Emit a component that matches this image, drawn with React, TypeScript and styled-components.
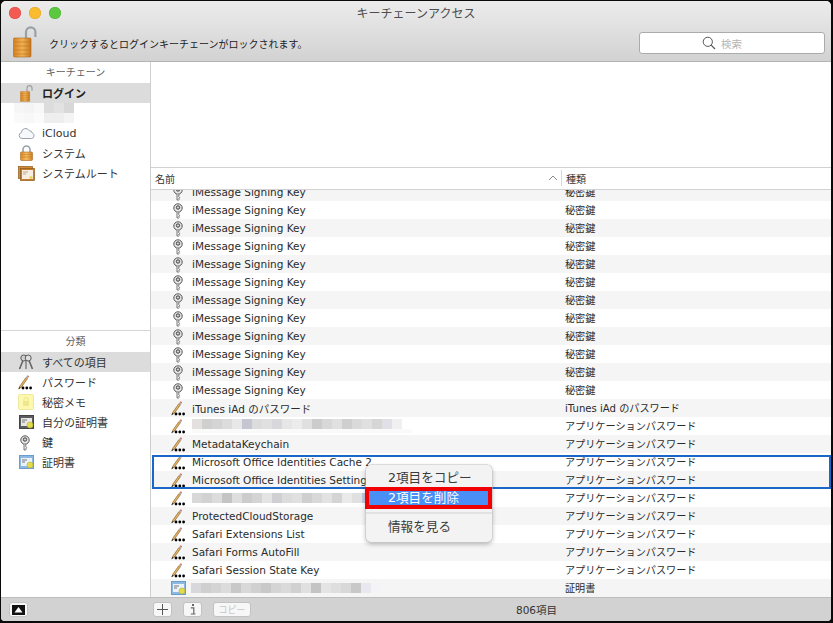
import React from "react";
import styled, { createGlobalStyle } from "styled-components";

const GlobalStyle = createGlobalStyle`
  html, body {
    margin: 0;
    padding: 0;
    background: #0a0a0a;
    overflow: hidden;
  }
`;

const latin = `"DejaVu Sans", "Noto Sans CJK JP", sans-serif`;

const Window = styled.div`
  box-sizing: border-box;
  width: 830px;
  height: 620px;
  margin: 1px 0 0 1px;
  display: flex;
  flex-direction: column;
  background: #fff;
  border-radius: 5px 5px 4px 4px;
  overflow: hidden;
  font-family: ${latin};
  color: #2c2c2c;
`;

const TitleBar = styled.header`
  box-sizing: border-box;
  height: 61px;
  flex: none;
  display: flex;
  flex-direction: column;
  background: linear-gradient(#ececec, #d2d2d2);
  border-bottom: 1px solid #b4b4b4;
`;

const TitleRow = styled.div`
  height: 23px;
  display: flex;
  align-items: center;
  padding-left: 8px;
`;

const Light = styled.span<{ $color: string; $edge: string }>`
  width: 12px;
  height: 12px;
  margin-right: 8px;
  border-radius: 50%;
  background: ${(p) => p.$color};
  box-shadow: inset 0 0 0 0.5px ${(p) => p.$edge};
`;

const Title = styled.div`
  flex: 1;
  margin-left: -60px;
  padding-right: 8px;
  text-align: center;
  font-size: 12px;
  color: #4d4d4d;
`;

const ToolRow = styled.div`
  flex: 1;
  display: flex;
  align-items: center;
  padding: 0 6px 1px 12px;
`;

const LockHint = styled.div`
  flex: 1;
  margin-left: 12px;
  margin-top: 2px;
  font-size: 10px;
  color: #222;
`;

const SearchField = styled.div`
  box-sizing: border-box;
  width: 186px;
  height: 22px;
  margin-top: 2px;
  display: flex;
  align-items: center;
  justify-content: center;
  gap: 5px;
  padding-right: 20px;
  background: #fff;
  border: 1px solid #ababab;
  border-radius: 3px;
  font-size: 10.5px;
  color: #b5b5b5;
`;

const Body = styled.div`
  flex: 1;
  min-height: 0;
  display: flex;
`;

const Sidebar = styled.aside`
  box-sizing: border-box;
  width: 150px;
  flex: none;
  display: flex;
  flex-direction: column;
  border-right: 1px solid #cfcfcf;
`;

const SideSection = styled.section<{ $first?: boolean }>`
  flex: ${(p) => (p.$first ? "none" : "1")};
  height: ${(p) => (p.$first ? "268px" : "auto")};
  border-top: ${(p) => (p.$first ? "none" : "1px solid #d6d6d6")};
`;

const SideHeading = styled.div`
  height: 21px;
  line-height: 21px;
  text-align: center;
  font-size: 10px;
  color: #5f5f5f;
`;

const SideRow = styled.div<{ $selected?: boolean }>`
  height: 20px;
  display: flex;
  align-items: center;
  gap: 7px;
  padding-left: 16px;
  font-size: 11px;
  background: ${(p) => (p.$selected ? "#dcdcdc" : "transparent")};
  color: #333;
`;

const SideIcon = styled.span`
  width: 18px;
  height: 20px;
  flex: none;
  display: flex;
  align-items: center;
  justify-content: center;
`;

const BoldLabel = styled.span`
  font-weight: 700;
  color: #222;
`;

const SideBlur = styled.div`
  height: 20px;
  padding-left: 13px;
  display: flex;
  flex-direction: column;
  justify-content: center;
`;

const Main = styled.main`
  flex: 1;
  min-width: 0;
  display: flex;
  flex-direction: column;
`;

const PreviewPane = styled.div`
  height: 105px;
  flex: none;
  background: #fff;
`;

const TableHeader = styled.div`
  box-sizing: border-box;
  height: 23px;
  flex: none;
  display: flex;
  align-items: center;
  padding-bottom: 1px;
  border-top: 1px solid #d2d2d2;
  border-bottom: 1px solid #d2d2d2;
  font-size: 10px;
  color: #333;
  background: #fff;
`;

const NameHeader = styled.div`
  box-sizing: border-box;
  width: 411px;
  height: 16px;
  padding: 0 3px 0 4px;
  display: flex;
  align-items: center;
  justify-content: space-between;
  border-right: 1px solid #d8d8d8;
`;

const KindHeader = styled.div`
  padding-left: 4px;
`;

const ListWrap = styled.div`
  flex: 1;
  min-height: 0;
  position: relative;
`;

const List = styled.div`
  height: 100%;
  display: flex;
  flex-direction: column;
  justify-content: flex-end;
  overflow: hidden;
`;

const Row = styled.div<{ $striped: boolean }>`
  height: 18px;
  flex: none;
  display: flex;
  align-items: center;
  background: ${(p) => (p.$striped ? "#f5f5f5" : "#fff")};
  font-size: 10.5px;
  color: #2b2b2b;
`;

const NameCell = styled.div`
  width: 411px;
  flex: none;
  box-sizing: border-box;
  padding-left: 20px;
  display: flex;
  align-items: center;
  gap: 5px;
  white-space: nowrap;

  & > svg {
    flex: none;
  }
`;

const KindCell = styled.div`
  padding: 0 0 1px 3px;
  font-size: 10.15px;
  white-space: nowrap;
`;

const SelectedGroup = styled.div`
  flex: none;
  position: relative;

  &::after {
    content: "";
    position: absolute;
    top: 2px;
    left: 1px;
    right: 0;
    bottom: 0;
    border: 2px solid #1b66c9;
    pointer-events: none;
  }
`;

const MosaicBox = styled.div`
  display: flex;
  flex-direction: column;
`;

const Strip = styled.div`
  display: flex;
`;

const Cell = styled.span<{ $c: string; $h: number }>`
  width: 10px;
  height: ${(p) => p.$h}px;
  background: ${(p) => p.$c};
`;

const ContextMenu = styled.div`
  position: absolute;
  left: 215px;
  top: 275px;
  width: 126px;
  height: 77px;
  box-sizing: border-box;
  padding-top: 4px;
  background: #f3f3f3;
  border-radius: 5px;
  box-shadow: 0 0 0 0.5px #c4c4c4, 0 2px 5px rgba(0, 0, 0, 0.3);
  font-size: 12.6px;
  color: #3a3a3a;
`;

const MenuItem = styled.div`
  height: 18px;
  line-height: 18px;
  padding-left: 22px;
`;

const MenuItemActive = styled.div`
  box-sizing: border-box;
  height: 22px;
  margin: 0 0 0 -1px;
  padding-left: 19px;
  line-height: 14px;
  background: #4a8ff5;
  border: 4px solid #f00000;
  color: #fff;
`;

const MenuSep = styled.div`
  height: 2px;
  margin: 3px 0 4px;
  background: #e2e2e2;
`;

const BottomBar = styled.footer`
  box-sizing: border-box;
  height: 24px;
  flex: none;
  display: flex;
  align-items: center;
  background: #d2d2d2;
  border-top: 1px solid #bdbdbd;
`;

const BarLeft = styled.div`
  width: 152px;
  flex: none;
  padding-left: 8px;
  box-sizing: border-box;
  display: flex;
`;

const BarButton = styled.button<{ $w?: number; $faded?: boolean }>`
  box-sizing: border-box;
  width: ${(p) => p.$w ?? 19}px;
  height: 15px;
  margin: 0 11px 0 0;
  padding: 0;
  display: flex;
  align-items: center;
  justify-content: center;
  background: #f7f7f7;
  border: 1px solid #c2c2c2;
  border-radius: 3px;
  font-family: ${latin};
  font-size: 9px;
  color: ${(p) => (p.$faded ? "#c6c6c6" : "#444")};
`;

const Count = styled.div`
  margin-left: 254px;
  font-size: 10.5px;
  color: #333;
`;

const KeyIcon = () => (
  <svg width="16" height="18" viewBox="0 0 16 18" fill="none">
    <circle cx="7" cy="7" r="4.2" fill="#e6e6e6" stroke="#555" />
    <circle cx="7" cy="6.5" r="1.7" fill="#cfcfcf" stroke="#333" strokeWidth="0.9" />
    <path d="M6 11.2V17h1.6l1-.9-.8-.8.8-.8-.8-.8V11.2" fill="#f2f2f2" stroke="#555" strokeWidth="0.8" />
  </svg>
);

const PencilIcon = () => (
  <svg width="16" height="16" viewBox="0 0 16 16" fill="none">
    <path d="M8 3.5 2 11.9l-1.3 3 2.8-1.9 6-8.4z" fill="#f0b257" stroke="#7c6536" strokeWidth="0.7" />
    <path d="M8 3.5l1.5 1.1.9-1.3-1.5-1.1z" fill="#b9b9b9" stroke="#8a8a8a" strokeWidth="0.3" />
    <path d="M8.9 2.2l1.5 1.1.7-1-1.5-1.1z" fill="#d9614f" />
    <path d="M1.5 12.9l-.8 2 1.8-1.2z" fill="#222" />
    <circle cx="5" cy="14" r="1.4" fill="#000" />
    <circle cx="8.8" cy="14" r="1.4" fill="#000" />
    <circle cx="12.6" cy="14" r="1.4" fill="#000" />
  </svg>
);

const CertIcon = ({ blue }: { blue?: boolean }) => (
  <svg width="15" height="14" viewBox="0 0 15 14" fill="none">
    <rect x="0.5" y="0.5" width="14" height="13" fill={blue ? "#8db8e2" : "#5d5d5d"} stroke={blue ? "#6a9ccc" : "#444"} />
    <rect x="2" y="3" width="11" height="8" fill={blue ? "#e9f2fa" : "#e8e8e8"} />
    <path d="M3 5h5M3 7h3" stroke="#777" />
    <circle cx="11" cy="10" r="3" fill="#e2dc4a" stroke="#b8ae2c" strokeWidth="0.6" />
  </svg>
);

const NoteIcon = () => (
  <svg width="16" height="16" viewBox="0 0 16 16" fill="none">
    <rect x="0.5" y="0.5" width="15" height="15" rx="1" fill="#fdf8b0" stroke="#eee79c" />
    <rect x="5" y="7" width="6" height="5" fill="#f0e78c" />
    <path d="M6 7V5.5a2 2 0 0 1 4 0V7" stroke="#f0e78c" strokeWidth="1.2" />
  </svg>
);

const CloudIcon = () => (
  <svg width="17" height="14" viewBox="0 0 17 14" fill="none">
    <path
      d="M4 12.5a3 3 0 0 1-.6-5.9 4.2 4.2 0 0 1 7.9-1.9 2.8 2.8 0 0 1 3 2.4 2.8 2.8 0 0 1-.8 5.4z"
      fill="#f6f8fb"
      stroke="#9aa2ad"
    />
  </svg>
);

const OpenLock = ({ w, h }: { w: number; h: number }) => (
  <svg width={w} height={h} viewBox="0 0 24 32" fill="none">
    <defs>
      <linearGradient id="goldOpen" x1="0" x2="1" y1="0" y2="0">
        <stop offset="0" stopColor="#d8801f" />
        <stop offset="0.5" stopColor="#f1b256" />
        <stop offset="1" stopColor="#c8771e" />
      </linearGradient>
    </defs>
    <path d="M13 12V6a4.7 4.7 0 0 1 9.4 0v5" stroke="#9aa0a8" strokeWidth="2.2" />
    <rect x="0.5" y="12" width="17.5" height="19" rx="1" fill="url(#goldOpen)" stroke="#a86a1f" strokeWidth="0.6" />
    <path d="M1 16h17M1 20h17M1 24h17M1 28h17" stroke="#b8761f" strokeWidth="0.6" />
  </svg>
);

const ClosedLock = () => (
  <svg width="13" height="16" viewBox="0 0 13 16" fill="none">
    <defs>
      <linearGradient id="goldClosed" x1="0" x2="1" y1="0" y2="0">
        <stop offset="0" stopColor="#dc8b29" />
        <stop offset="0.5" stopColor="#f4bb62" />
        <stop offset="1" stopColor="#d08024" />
      </linearGradient>
    </defs>
    <path d="M3 7V4.5a3.5 3.5 0 0 1 7 0V7" stroke="#9aa0a8" strokeWidth="1.6" />
    <rect x="0.5" y="7" width="12" height="8.5" rx="1" fill="url(#goldClosed)" stroke="#a86a1f" strokeWidth="0.6" />
    <path d="M1 9.5h11M1 12h11" stroke="#b8761f" strokeWidth="0.5" />
  </svg>
);

const RootCertIcon = () => (
  <svg width="17" height="15" viewBox="0 0 17 15" fill="none">
    <rect x="0.5" y="0.5" width="14" height="12" fill="#d58a34" stroke="#8c5b1f" strokeWidth="0.7" />
    <rect x="2.5" y="2.5" width="14" height="12" fill="#c97d2b" stroke="#8c5b1f" strokeWidth="0.7" />
    <rect x="4" y="4" width="11" height="9" fill="#f6eee2" />
    <path d="M5 6h5M5 8h3" stroke="#b9a98f" />
    <circle cx="13" cy="11.5" r="1.6" fill="#e6d65a" />
  </svg>
);

const AllItemsIcon = () => (
  <svg width="16" height="16" viewBox="0 0 16 16" fill="none">
    <path d="M5 6.5 1.5 15M11 6.5 14.5 15" stroke="#666" strokeWidth="1.6" />
    <path d="M8 7v8" stroke="#888" strokeWidth="1.6" />
    <circle cx="5.8" cy="4" r="3" fill="#cfcfcf" stroke="#5c5c5c" />
    <circle cx="10.2" cy="4" r="3" fill="#dedede" stroke="#5c5c5c" />
  </svg>
);

const SearchIcon = () => (
  <svg width="14" height="14" viewBox="0 0 14 14" fill="none">
    <circle cx="5.8" cy="5.8" r="4.6" stroke="#555" strokeWidth="1" />
    <path d="M9.2 9.2 13 13" stroke="#555" strokeWidth="1.2" />
  </svg>
);

const PlusIcon = () => (
  <svg width="11" height="11" viewBox="0 0 11 11">
    <path d="M5.5 0v11M0 5.5h11" stroke="#555" strokeWidth="1" />
  </svg>
);

const InfoIcon = () => (
  <svg width="6" height="11" viewBox="0 0 6 11">
    <rect x="2" y="0" width="2" height="2" fill="#666" />
    <path d="M.8 3.8H3.8V10H5.4M.8 10h3" stroke="#666" strokeWidth="1.2" fill="none" />
  </svg>
);

const PreviewIcon = () => (
  <svg width="13" height="10" viewBox="0 0 13 10">
    <rect x="0" y="0" width="13" height="10" fill="#111" />
    <path d="M6.5 2 10.5 7.5h-8z" fill="#fff" />
  </svg>
);

const Mosaic = ({ top, bottom }: { top: string[]; bottom?: string[] }) => (
  <MosaicBox>
    <Strip>
      {top.map((c, i) => (
        <Cell key={i} $c={c} $h={10} />
      ))}
    </Strip>
    {bottom && (
      <Strip>
        {bottom.map((c, i) => (
          <Cell key={i} $c={c} $h={4} />
        ))}
      </Strip>
    )}
  </MosaicBox>
);

const blurA = [
  "#e4e0e0", "#cfcfcf", "#d4d4d4", "#dcdcdc", "#e8e8e8", "#c6c6d2", "#dcdcdc", "#e0e0e0", "#d8d8dc", "#e6e6e6",
  "#ececec", "#e0e0e0", "#cccccc", "#d8d8d8", "#e0e0e0", "#cfcfcf", "#dadada", "#e0e0e0", "#d6d6d6", "#e0e0e6", "#f0f0f0",
];
const blurAUnder = Array(22).fill("#fafafa");
const blurB = [
  "#d8d8d8", "#d2d2d2", "#dcdcdc", "#c4c4c4", "#dedede", "#cccccc", "#d4d4d4", "#e4e4e4", "#d0d0d4", "#dcdcdc",
  "#e0e0e0", "#cfcfcf", "#d8d8d8", "#e2e2e2", "#d4d4d4", "#eaeaea", "#e0e0e0", "#c0c8e0",
];
const blurC = [
  "#d8d8dc", "#cfcfcf", "#d4d4d4", "#dcdcdc", "#c8c8c8", "#d8d8d8", "#d0d0d0", "#c8c8c8", "#d4d4d4", "#dadada",
  "#d0d0d0", "#e0e0e0", "#c4c4c4", "#e4e4e4", "#dedede", "#d8d8d8", "#c8c8c8", "#e8e8ee", "#f4f4f8",
];

const blurNames: Record<string, string[]> = { a: blurA, b: blurB, c: blurC };

type Item = { name?: string; blur?: string; kind: string; icon: "key" | "pencil" | "cert" };

const appPw = "アプリケーションパスワード";

const keyRows: Item[] = Array.from({ length: 12 }, () => ({
  name: "iMessage Signing Key",
  kind: "秘密鍵",
  icon: "key" as const,
}));

const beforeSelected: Item[] = [
  ...keyRows,
  { name: "iTunes iAd のパスワード", kind: "iTunes iAd のパスワード", icon: "pencil" },
  { blur: "a", kind: appPw, icon: "pencil" },
  { name: "MetadataKeychain", kind: appPw, icon: "pencil" },
];

const selected: Item[] = [
  { name: "Microsoft Office Identities Cache 2", kind: appPw, icon: "pencil" },
  { name: "Microsoft Office Identities Settings 2", kind: appPw, icon: "pencil" },
];

const afterSelected: Item[] = [
  { blur: "b", kind: appPw, icon: "pencil" },
  { name: "ProtectedCloudStorage", kind: appPw, icon: "pencil" },
  { name: "Safari Extensions List", kind: appPw, icon: "pencil" },
  { name: "Safari Forms AutoFill", kind: appPw, icon: "pencil" },
  { name: "Safari Session State Key", kind: appPw, icon: "pencil" },
  { blur: "c", kind: "証明書", icon: "cert" },
];

const renderRow = (item: Item, index: number) => (
  <Row key={index} $striped={index % 2 === 0}>
    <NameCell>
      {item.icon === "key" && <KeyIcon />}
      {item.icon === "pencil" && <PencilIcon />}
      {item.icon === "cert" && <CertIcon blue />}
      {item.blur ? (
        <Mosaic top={blurNames[item.blur]} bottom={item.blur === "a" ? blurAUnder : undefined} />
      ) : (
        item.name
      )}
    </NameCell>
    <KindCell>{item.kind}</KindCell>
  </Row>
);

const App = () => {
  const offset = beforeSelected.length;
  return (
    <>
      <GlobalStyle />
      <Window>
        <TitleBar>
          <TitleRow>
            <Light $color="#f25a52" $edge="#dc4a43" />
            <Light $color="#fabc2f" $edge="#e0a325" />
            <Light $color="#5cc83f" $edge="#4bb033" />
            <Title>キーチェーンアクセス</Title>
          </TitleRow>
          <ToolRow>
            <OpenLock w={24} h={32} />
            <LockHint>クリックするとログインキーチェーンがロックされます。</LockHint>
            <SearchField>
              <SearchIcon />
              検索
            </SearchField>
          </ToolRow>
        </TitleBar>
        <Body>
          <Sidebar>
            <SideSection $first>
              <SideHeading>キーチェーン</SideHeading>
              <SideRow $selected>
                <SideIcon>
                  <OpenLock w={13} h={17} />
                </SideIcon>
                <BoldLabel>ログイン</BoldLabel>
              </SideRow>
              <SideBlur>
                <Strip>
                  {["#f6f6f6", "#f4f4f4", "#f8f8f8", "#dcdcdc", "#e2e2e2", "#d8d8d8"].map((c, i) => (
                    <Cell key={i} $c={c} $h={10} />
                  ))}
                </Strip>
                <Strip>
                  {["#fafafa", "#f8f8f8", "#fbfbfb", "#eeeeee", "#eeeeee", "#f4f4f4"].map((c, i) => (
                    <Cell key={i} $c={c} $h={10} />
                  ))}
                </Strip>
              </SideBlur>
              <SideRow>
                <SideIcon>
                  <CloudIcon />
                </SideIcon>
                iCloud
              </SideRow>
              <SideRow>
                <SideIcon>
                  <ClosedLock />
                </SideIcon>
                システム
              </SideRow>
              <SideRow>
                <SideIcon>
                  <RootCertIcon />
                </SideIcon>
                システムルート
              </SideRow>
            </SideSection>
            <SideSection>
              <SideHeading>分類</SideHeading>
              <SideRow $selected>
                <SideIcon>
                  <AllItemsIcon />
                </SideIcon>
                すべての項目
              </SideRow>
              <SideRow>
                <SideIcon>
                  <PencilIcon />
                </SideIcon>
                パスワード
              </SideRow>
              <SideRow>
                <SideIcon>
                  <NoteIcon />
                </SideIcon>
                秘密メモ
              </SideRow>
              <SideRow>
                <SideIcon>
                  <CertIcon />
                </SideIcon>
                自分の証明書
              </SideRow>
              <SideRow>
                <SideIcon>
                  <KeyIcon />
                </SideIcon>
                鍵
              </SideRow>
              <SideRow>
                <SideIcon>
                  <CertIcon blue />
                </SideIcon>
                証明書
              </SideRow>
            </SideSection>
          </Sidebar>
          <Main>
            <PreviewPane />
            <TableHeader>
              <NameHeader>
                名前
                <svg width="10" height="6" viewBox="0 0 10 6" fill="none">
                  <path d="M1 5l4-4 4 4" stroke="#8a8a8a" />
                </svg>
              </NameHeader>
              <KindHeader>種類</KindHeader>
            </TableHeader>
            <ListWrap>
              <List>
                {beforeSelected.map((item, i) => renderRow(item, i))}
                <SelectedGroup>{selected.map((item, i) => renderRow(item, offset + i))}</SelectedGroup>
                {afterSelected.map((item, i) => renderRow(item, offset + 2 + i))}
              </List>
              <ContextMenu>
                <MenuItem>2項目をコピー</MenuItem>
                <MenuItemActive>2項目を削除</MenuItemActive>
                <MenuSep />
                <MenuItem>情報を見る</MenuItem>
              </ContextMenu>
            </ListWrap>
          </Main>
        </Body>
        <BottomBar>
          <BarLeft>
            <BarButton>
              <PreviewIcon />
            </BarButton>
          </BarLeft>
          <BarButton>
            <PlusIcon />
          </BarButton>
          <BarButton>
            <InfoIcon />
          </BarButton>
          <BarButton $w={38} $faded>
            コピー
          </BarButton>
          <Count>806項目</Count>
        </BottomBar>
      </Window>
    </>
  );
};

export default App;
